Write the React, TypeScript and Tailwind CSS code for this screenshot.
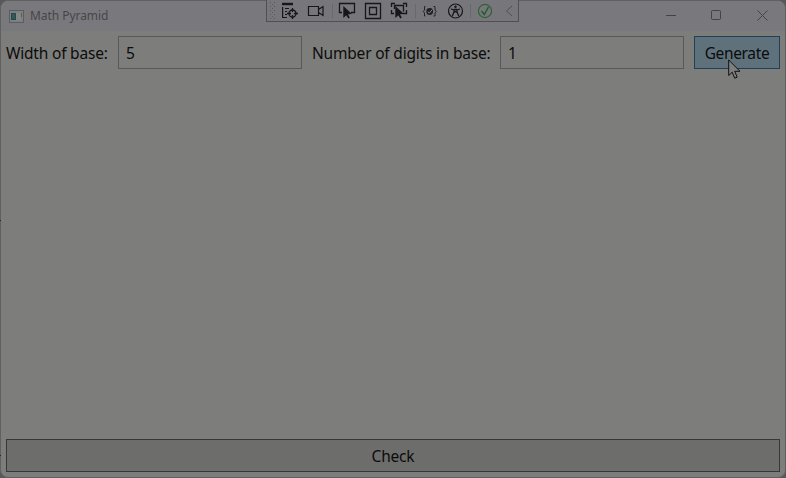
import type { ReactNode } from "react";

function ToolIcon({ children }: { children: ReactNode }) {
  return (
    <svg className="h-[21px] w-5 shrink-0" viewBox="0 0 20 21" fill="none" stroke="#171719" strokeWidth="1.3">
      {children}
    </svg>
  );
}

function Separator() {
  return <i className="mt-1 h-3.5 w-px shrink-0 bg-[#69696c]" />;
}

function DebugToolbar() {
  return (
    <div className="absolute left-[266px] top-0 flex h-[22px] w-[253px] items-start gap-1 overflow-hidden border border-t-0 border-[#505052] bg-[#77777b] pl-[3px]">
      <svg className="mt-0.5 h-[17px] w-[6px] shrink-0" viewBox="0 0 6 17" fill="#5a5a5d">
        {[0, 4, 8, 12, 16].map((y) => (
          <g key={y}>
            <rect x="0" y={y} width="1" height="1" />
            <rect x="4" y={y} width="1" height="1" />
            <rect x="2" y={y + 2} width="1" height="1" />
          </g>
        ))}
      </svg>
      <div className="flex gap-1.5 pr-0.5">
        <ToolIcon>
          <path d="M2 4h11" strokeWidth="2.400" />
          <path d="M2.600 7v10.500H7" strokeWidth="1.200" />
          <path d="M5 8.500h4M5 11.500h2M5 14.500h2" strokeWidth="1" />
          <circle cx="12.500" cy="13.500" r="3.500" />
          <path d="M12.500 8v4M12.500 15v4M7 13.500h4M14 13.500h4" />
        </ToolIcon>
        <ToolIcon>
          <path d="M2.500 6.500h10v9h-10zM12.500 9.500l4.500-3v9l-4.500-3" strokeWidth="1.200" />
        </ToolIcon>
      </div>
      <Separator />
      <div className="flex gap-1.5 pr-0.5">
        <ToolIcon>
          <path d="M5 12.500H2.500v-9h15v9H14" />
          <path d="M6.300 6v12l3-2.800 2 3.300 1.500-1-1.800-3.200 4-.3z" fill="#171719" stroke="none" />
        </ToolIcon>
        <ToolIcon>
          <path d="M2.500 3.500h15v15h-15zM6.500 7.500h7v7h-7z" />
        </ToolIcon>
        <ToolIcon>
          <path d="M2.500 7V3.500H6M14 3.500h3.500V7M2.500 10v3.500H5M14 13.500h3.500V10M5.500 9V5.500h9v6" />
          <path d="M6.300 6v12l3-2.800 2 3.300 1.500-1-1.800-3.200 4-.3z" fill="#171719" stroke="none" />
        </ToolIcon>
      </div>
      <Separator />
      <div className="flex gap-[5px] pr-px">
        <ToolIcon>
          <path d="M5.500 6.500h-1v3.500l-1.200 1.500 1.200 1.500v3h1M13.500 6.500h1.500v3.500l1.200 1.500-1.200 1.500v3h-1.500" strokeWidth="1" stroke="#252527" />
          <circle cx="9.700" cy="11.500" r="3.400" fill="#202022" stroke="none" />
          <path d="M7.800 11.700l1.500 1.400 3-3.500" stroke="#88888a" strokeWidth="1" />
        </ToolIcon>
        <ToolIcon>
          <circle cx="10.500" cy="11" r="7" strokeWidth="1.200" />
          <circle cx="10.500" cy="6.700" r="1.200" fill="#171719" stroke="none" />
          <path d="M6 9l3 .9v2L7.300 16M15 9l-3 .9v2l1.700 4.100M9 9.500h3M9 12.500l1.500-1 1.500 1" />
        </ToolIcon>
      </div>
      <Separator />
      <div className="flex gap-1.5">
        <ToolIcon>
          <circle cx="10" cy="11" r="6.600" stroke="#2e6338" strokeWidth="1.200" />
          <path d="M6.500 11l2.800 3.500L13.500 7" stroke="#1f5c2b" strokeWidth="1.500" />
        </ToolIcon>
        <ToolIcon>
          <path d="M11 6L5.500 11l5.500 5" stroke="#505052" strokeWidth="1" />
        </ToolIcon>
      </div>
    </div>
  );
}

function Field({ value }: { value: string }) {
  return <div className="w-[184px] shrink-0 border border-[#58585a] px-[7px] leading-[33px]">{value}</div>;
}

export default function App() {
  return (
    <div className="relative h-[478px] w-[786px] overflow-hidden bg-[#58585a] font-['Noto_Sans','Open_Sans',sans-serif] text-[#0c0c0c]">
      <main className="flex h-full w-full flex-col overflow-hidden rounded-[8px] border border-[#606060] bg-[#7d7d7b]">
        <header className="flex h-[30px] shrink-0 items-center gap-1.5 bg-[#79797d] pl-2 pr-[17px]">
          <svg className="h-[13px] w-[15px]" viewBox="0 0 15 13">
            <rect x=".5" y=".5" width="14" height="12" fill="#7f7f80" stroke="#5b5e60" />
            <rect x="2" y="3" width="5" height="7" fill="#28485a" />
            <rect x="3" y="4" width="3" height="5" fill="#2d5b4e" />
            <rect x="7" y="3" width="5" height="7" fill="#858686" />
            <rect x="12" y="3" width="1" height="4" fill="#59595c" />
          </svg>
          <span className="text-[12px] leading-4 tracking-[-0.05px] text-[#464648]">Math Pyramid</span>
          <div className="ml-auto flex items-center gap-[35px]">
            <svg className="h-3 w-[10px]" viewBox="0 0 10 12" stroke="#434345"><path d="M0 5.500h10" /></svg>
            <svg className="h-3 w-[11px]" viewBox="0 0 11 12" fill="none" stroke="#434345"><rect x=".5" y=".5" width="9" height="9" rx="1" /></svg>
            <svg className="h-3 w-[11px]" viewBox="0 0 11 12" stroke="#434345"><path d="M.5.5l10 10M10.500.5l-10 10" /></svg>
          </div>
        </header>
        <section className="flex flex-1 flex-col justify-between p-[5px] text-[15.5px] tracking-[-0.2px]">
          <div className="flex h-[33px] gap-2.5">
            <label className="w-[102px] shrink-0 whitespace-nowrap leading-[35px]">Width of base:</label>
            <Field value="5" />
            <label className="w-[178px] shrink-0 whitespace-nowrap leading-[35px]">Number of digits in base:</label>
            <Field value="1" />
            <button className="flex-1 border border-[#1e4159] bg-[#5f727c] text-center leading-[32px] tracking-[-0.35px]">Generate</button>
          </div>
          <button className="h-[33px] border border-[#373737] bg-[#6d6d6b] text-center leading-[32px]">Check</button>
        </section>
      </main>
      <DebugToolbar />
      <i className="absolute left-0 top-[220px] h-px w-px bg-[#252527]" />
      <i className="absolute left-0 top-[455px] h-px w-px bg-[#252527]" />
      <svg className="absolute left-[728px] top-[59px] h-[21px] w-[13px]" viewBox="0 0 13 21">
        <path d="M.7 1v15.500l3.500-3.300 2.500 6 2.500-1-2.500-5.900H12z" fill="#7f7f7f" stroke="#101010" />
      </svg>
    </div>
  );
}
